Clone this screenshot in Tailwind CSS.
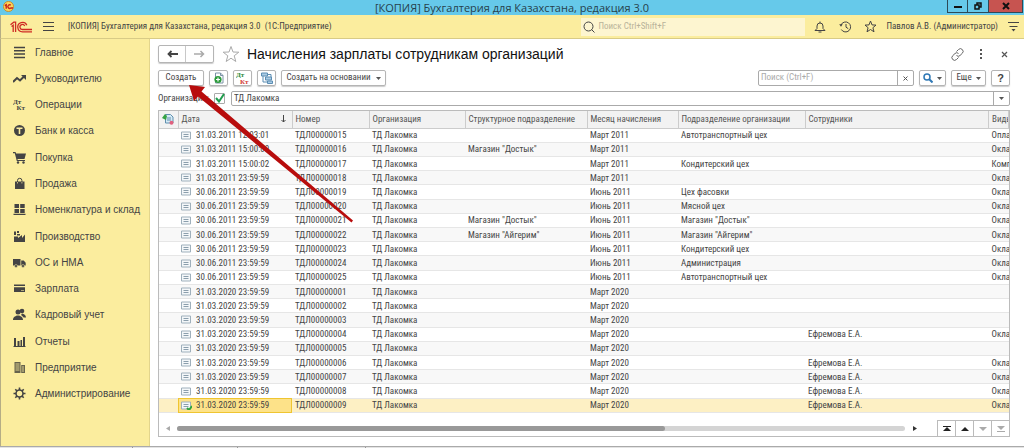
<!DOCTYPE html>
<html lang="ru">
<head>
    <meta charset="UTF-8">
    <meta name="viewport" content="width=device-width, initial-scale=1.0">
    <title>Бухгалтерия для Казахстана - Начисления зарплаты</title>
    <script src="https://cdn.jsdelivr.net/npm/@tailwindcss/browser@4"></script>
</head>
<body class="h-screen flex flex-col overflow-hidden bg-white text-[#444] text-[9px] font-['Roboto_Condensed','Liberation_Sans_Narrow',sans-serif]">

    <!-- Window title -->
    <header class="relative h-[15px] shrink-0 bg-[#66c9ea] flex items-center justify-center">
        <svg class="absolute left-[3px] top-px size-[11px]" viewBox="0 0 12 12">
            <circle cx="6" cy="6" r="5.5" fill="#fbd45a" stroke="#c98a2a"/>
            <path d="M2 5l1.500-1v4.500M8.500 4.500a2 2 0 1 0 0 3.200h2.500" fill="none" stroke="#c8201c" stroke-width="1.500"/>
        </svg>
        <p class="text-[11px] leading-[14px] text-[#26414c] font-['Open_Sans',sans-serif]">[КОПИЯ] Бухгалтерия для Казахстана, редакция 3.0</p>
        <div class="absolute right-[1px] top-0 h-[13px] flex border border-t-0 border-[#2d4a57]">
            <button aria-label="Свернуть" class="w-[20px] flex items-center justify-center border-r border-[#2d4a57]"><svg class="w-2 h-2" viewBox="0 0 8 8"><path d="M0 5h8" stroke="#111" stroke-width="2"/></svg></button>
            <button aria-label="Развернуть" class="w-[20px] flex items-center justify-center"><svg class="w-2 h-2" viewBox="0 0 8 8"><path d="M1 3h4v4H1zM3 3V1h4v4H5" fill="none" stroke="#111" stroke-width="1.500"/></svg></button>
            <button aria-label="Закрыть" class="w-[34px] flex items-center justify-center bg-[#c75450] border-l border-[#2d4a57]"><svg class="w-2 h-2" viewBox="0 0 8 8"><path d="M1 1l6 6M7 1L1 7" stroke="#111" stroke-width="2"/></svg></button>
        </div>
    </header>

    <!-- Application bar -->
    <div class="h-[24px] shrink-0 flex items-center bg-[#fbed9e] border-b border-[#d8cb86] border-l border-l-[#b5ad85] pl-[9px] pr-[5px]">
        <svg class="w-[22px] h-[12px] shrink-0" viewBox="0 0 22 12" fill="none" stroke="#cf2b25" stroke-width="1.300">
            <path d="M.5 3.800L3.800 1.200H5.600V11M1.500 5.500L3.200 4.300V11"/>
            <path d="M16.800 4.200A4.700 4.700 0 1 0 12.500 10.800H22"/>
            <path d="M14.700 5A2.500 2.500 0 1 0 12.500 8.500H22"/>
        </svg>
        <button aria-label="Меню" class="ml-[11px] shrink-0"><svg class="w-[11px] h-[10px]" viewBox="0 0 11 10"><path d="M0 .5h11M0 4.500h11M0 8.500h11" stroke="#444"/></svg></button>
        <p class="ml-[14px] whitespace-pre">[КОПИЯ] Бухгалтерия для Казахстана, редакция 3.0  (1С:Предприятие)</p>
        <label class="ml-auto w-[224px] h-[18px] flex items-center gap-[3px] pl-[2px] bg-[#fdf5d0]">
            <svg class="size-[12px] shrink-0" viewBox="0 0 12 12" fill="none" stroke="#444"><circle cx="5.500" cy="5.500" r="4.500"/><path d="M8.500 8.500l3 3"/></svg>
            <input type="text" placeholder="Поиск Ctrl+Shift+F" class="flex-1 min-w-0 outline-none placeholder:text-[#b9b39a]">
        </label>
        <button aria-label="Оповещения" class="ml-[9px]"><svg class="size-[12px]" viewBox="0 0 12 12" fill="none" stroke="#444"><path d="M1 9.500h10L9 7.500V5a3 3 0 0 0-6 0v2.500zM6 .5v1.500M4.500 11h3"/></svg></button>
        <button aria-label="История" class="ml-[13px]"><svg class="w-[13px] h-[12px]" viewBox="0 0 13 12" fill="none" stroke="#444"><path d="M2 4a5 5 0 1 1 .3 4.500M7 3v3.200l2.300 1.500"/><path d="M.2 3.200h3.500L2 5.800z" fill="#444" stroke="none"/></svg></button>
        <button aria-label="Избранное" class="ml-[12px]"><svg class="size-[13px]" viewBox="0 0 13 13" fill="none" stroke="#444"><path d="M6.500 1l1.500 3.900 4 .2-3.100 2.600 1.100 4.100-3.500-2.300-3.500 2.300 1.100-4.100L1 5.100l4-.2z"/></svg></button>
        <a href="#" class="ml-[9px] whitespace-nowrap">Павлов А.В. (Администратор)</a>
        <button aria-label="Настройки" class="ml-[10px]"><svg class="w-[11px] h-[10px]" viewBox="0 0 11 10"><path d="M0 .5h11M1.500 4.500h8" stroke="#444"/><path d="M3.500 7h4l-2 2.500z" fill="#444"/></svg></button>
    </div>

    <div class="flex-1 min-h-0 flex">
        <!-- Sections -->
        <nav class="w-[150px] shrink-0 bg-[#fbed9e] border-l border-l-[#b5ad85] border-r border-r-[#e3d58c]">
            <ul id="sections" class="h-[368px] flex flex-col text-[10px] font-['Liberation_Sans',sans-serif]"></ul>
        </nav>

        <main class="flex-1 min-w-0 flex flex-col pl-[8px] pr-[14px] pt-[6px] pb-[9px]">
            <div class="h-[18px] flex items-center">
                <div class="h-[18px] flex border border-[#b5b5b5] rounded-[2px] shadow-[0_1px_1px_#ccc]">
                    <button aria-label="Назад" class="w-[27px] flex items-center justify-center border-r border-[#c8c8c8]"><svg class="w-[11px] h-[8px]" viewBox="0 0 11 8"><path d="M1 4h10M4.500 1L1.500 4l3 3" fill="none" stroke="#444" stroke-width="1.800"/></svg></button>
                    <button aria-label="Вперед" class="w-[27px] flex items-center justify-center"><svg class="w-[11px] h-[8px]" viewBox="0 0 11 8"><path d="M0 4h10M6.500 1l3 3-3 3" fill="none" stroke="#aaa" stroke-width="1.500"/></svg></button>
                </div>
                <button aria-label="В избранное" class="ml-[8px]"><svg class="size-[18px]" viewBox="0 0 18 18"><path d="M9 1.500l2 5.500 5.800.2-4.600 3.600 1.600 5.700L9 13.200l-4.800 3.300 1.600-5.700L1.200 7.200 7 7z" fill="none" stroke="#aaa"/></svg></button>
                <h1 class="ml-[7px] text-[14px] leading-[18px] text-[#111] whitespace-nowrap font-['Liberation_Sans',sans-serif]">Начисления зарплаты сотрудникам организаций</h1>
                <button aria-label="Ссылка" class="ml-auto"><svg class="size-[13px]" viewBox="0 0 13 13" fill="none" stroke="#666"><path d="M5.500 3.500L7.500 1.500a2.500 2.500 0 0 1 3.800 3.800L9 7.500a2.500 2.500 0 0 1-3.500 0M7.500 9.500l-2 2a2.500 2.500 0 0 1-3.800-3.800L4 5.500a2.500 2.500 0 0 1 3.500 0"/></svg></button>
                <button aria-label="Действия" class="ml-[15px]"><svg class="w-[4px] h-[10px]" viewBox="0 0 4 10" fill="#555"><path d="M1 0h2v2H1zM1 4h2v2H1zM1 8h2v2H1z"/></svg></button>
                <button aria-label="Закрыть форму" class="ml-[18px] mr-[2px]"><svg class="size-[7px]" viewBox="0 0 7 7"><path d="M1 1l5 5M6 1L1 6" stroke="#555" stroke-width="1.200"/></svg></button>
            </div>

            <!-- Commands -->
            <div class="mt-[7px] h-[16px] flex items-stretch gap-[5px] text-[#444]">
                <button class="w-[46px] border border-[#b5b5b5] rounded-[2px] shadow-[0_1px_1px_#ccc]">Создать</button>
                <button aria-label="Создать копированием" class="w-[19px] flex items-center justify-center border border-[#b5b5b5] rounded-[2px] shadow-[0_1px_1px_#ccc]"><svg class="size-[12px]" viewBox="0 0 12 12"><path d="M2.500 1h5l2.500 2.500V11H2.500z" fill="#fff" stroke="#7b93a6"/><path d="M7.500 1v2.500H10" fill="none" stroke="#7b93a6"/><circle cx="5" cy="7.500" r="3.600" fill="#2d9c3c"/><path d="M5 5.500v4M3 7.500h4" stroke="#fff" stroke-width="1.200"/></svg></button>
                <button aria-label="Проводки" class="w-[19px] flex items-center justify-center border border-[#b5b5b5] rounded-[2px] shadow-[0_1px_1px_#ccc]"><svg class="size-[14px] font-bold font-['Liberation_Serif',serif]" viewBox="0 0 14 14"><text x="0" y="6" font-size="7" fill="#2b8a3a">Дт</text><text x="4" y="13" font-size="7" fill="#d23a34">Кт</text></svg></button>
                <button aria-label="Структура подчиненности" class="w-[19px] flex items-center justify-center border border-[#b5b5b5] rounded-[2px] shadow-[0_1px_1px_#ccc]"><svg class="size-[12px]" viewBox="0 0 12 12" fill="#a9cbe4" stroke="#5b8db3"><path d="M.5 1h6v3h-6zM4.500 5h6v3h-6zM6.500 9h5v2.500h-5z"/><path d="M2 4v6h4.500M6.500 2.500H10V5" fill="none"/></svg></button>
                <button class="w-[105px] flex items-center justify-center gap-[5px] whitespace-nowrap border border-[#b5b5b5] rounded-[2px] shadow-[0_1px_1px_#ccc]">Создать на основании<svg class="w-[5px] h-[3px]" viewBox="0 0 5 3"><path d="M0 0h5L2.500 3z" fill="#555"/></svg></button>
                <div class="ml-auto w-[156px] flex border border-[#aaa] rounded-[2px]">
                    <input type="text" aria-label="Поиск" placeholder="Поиск (Ctrl+F)" class="flex-1 min-w-0 px-[2px] outline-none placeholder:text-[#aaa]">
                    <button aria-label="Очистить" class="w-[16px] flex items-center justify-center border-l border-[#aaa]"><svg class="size-[5px]" viewBox="0 0 5 5"><path d="M.5.5l4 4M4.500.5l-4 4" stroke="#555"/></svg></button>
                </div>
                <button aria-label="Найти" class="w-[27px] flex items-center justify-center gap-[4px] border border-[#b5b5b5] rounded-[2px] shadow-[0_1px_1px_#ccc]"><svg class="size-[10px]" viewBox="0 0 10 10" fill="none" stroke="#2f78b5"><circle cx="4" cy="4" r="3" stroke-width="1.500"/><path d="M6 6l3.500 3.500" stroke-width="2"/></svg><svg class="w-[5px] h-[3px]" viewBox="0 0 5 3"><path d="M0 0h5L2.500 3z" fill="#555"/></svg></button>
                <button class="w-[35px] flex items-center justify-center gap-[4px] border border-[#b5b5b5] rounded-[2px] shadow-[0_1px_1px_#ccc]">Еще<svg class="w-[5px] h-[3px]" viewBox="0 0 5 3"><path d="M0 0h5L2.500 3z" fill="#555"/></svg></button>
                <button class="w-[19px] text-[11px] leading-[14px] font-bold border border-[#b5b5b5] rounded-[2px] shadow-[0_1px_1px_#ccc] font-['Liberation_Sans',sans-serif]">?</button>
            </div>

            <!-- Filter -->
            <div class="mt-[5px] h-[15px] flex items-center">
                <label for="useOrg" class="w-[56px] whitespace-nowrap overflow-hidden">Организация:</label>
                <span class="relative size-[11px] mr-[6px]">
                    <input id="useOrg" type="checkbox" checked class="appearance-none block size-[11px] border border-[#aaa] rounded-[1px] bg-white">
                    <svg class="absolute left-px top-0 size-[10px] pointer-events-none" viewBox="0 0 10 10"><path d="M1 5l3 3.500L9 1" fill="none" stroke="#1f9d4d" stroke-width="2"/></svg>
                </span>
                <div class="flex-1 h-[15px] flex border border-[#aaa] rounded-[2px]">
                    <input type="text" aria-label="Организация" value="ТД Лакомка" class="flex-1 min-w-0 px-[2px] outline-none">
                    <button aria-label="Выбрать" class="w-[16px] flex items-center justify-center border-l border-[#aaa]"><svg class="w-[5px] h-[3px]" viewBox="0 0 5 3"><path d="M0 0h5L2.500 3z" fill="#555"/></svg></button>
                </div>
            </div>

            <!-- List -->
            <div class="mt-[4px] flex-1 min-h-0 flex flex-col border border-[#bbb] overflow-hidden">
                <table class="w-full h-[302px] table-fixed border-collapse leading-[12px]">
                    <colgroup>
                        <col class="w-[19px]"><col class="w-[114px]"><col class="w-[77px]"><col class="w-[96px]"><col class="w-[122px]"><col class="w-[91px]"><col class="w-[127px]"><col><col class="w-[20px]">
                    </colgroup>
                    <thead>
                        <tr class="h-[17px] bg-[#f2f2f2] text-left text-[#555] whitespace-nowrap *:font-normal *:p-0 *:pl-[3px] *:overflow-hidden *:border-r *:border-b *:border-[#ccc]">
                            <th aria-label="Состояние"><svg class="size-[12px]" viewBox="0 0 12 12"><path d="M3.500 1.500h5L11 4v6H3.500z" fill="#d5eaf5" stroke="#5e8fae"/><path d="M5 5h4M5 7h4" stroke="#5e8fae"/><path d="M0 5l3-4 2 2-1 4z" fill="#35a344"/><circle cx="9.500" cy="9.800" r="2" fill="#e0607e"/></svg></th>
                            <th><div class="flex items-center justify-between pr-[6px]">Дата<svg class="w-[5px] h-[8px]" viewBox="0 0 5 8"><path d="M2.500 0v7M.5 5l2 2 2-2" fill="none" stroke="#444"/></svg></div></th>
                            <th>Номер</th>
                            <th>Организация</th>
                            <th>Структурное подразделение</th>
                            <th>Месяц начисления</th>
                            <th>Подразделение организации</th>
                            <th>Сотрудники</th>
                            <th>Виды</th>
                        </tr>
                    </thead>
                    <tbody id="rows"></tbody>
                </table>
                <div class="mt-auto h-[16px] flex items-center">
                    <svg class="ml-[7px] w-[4px] h-[5px]" viewBox="0 0 4 5"><path d="M4 0v5L0 2.500z" fill="#aaa"/></svg>
                    <div class="ml-[7px] flex-1 h-[5px] rounded-full bg-[#d4d4d4]"><div class="w-[67%] h-full rounded-full bg-[#999]"></div></div>
                    <svg class="ml-[8px] mr-[20px] w-[4px] h-[5px]" viewBox="0 0 4 5"><path d="M0 0v5l4-2.500z" fill="#333"/></svg>
                    <div class="h-full flex border-t border-[#bbb] *:w-[18px] *:flex *:items-center *:justify-center *:border-l *:border-[#bbb]">
                        <button aria-label="В начало"><svg class="w-[8px] h-[6px]" viewBox="0 0 8 6"><path d="M0 0h8v1H0zM4 1l4 4H0z" fill="#222"/></svg></button>
                        <button aria-label="Выше"><svg class="w-[8px] h-[6px]" viewBox="0 0 8 6"><path d="M4 1l4 4H0z" fill="#222"/></svg></button>
                        <button aria-label="Ниже"><svg class="w-[8px] h-[6px]" viewBox="0 0 8 6"><path d="M0 1h8L4 5z" fill="#aaa"/></svg></button>
                        <button aria-label="В конец"><svg class="w-[8px] h-[6px]" viewBox="0 0 8 6"><path d="M0 0h8L4 4zM0 5h8v1H0z" fill="#aaa"/></svg></button>
                    </div>
                </div>
            </div>
        </main>
    </div>

    <!-- Open windows strip -->
    <footer class="h-[2px] shrink-0 flex bg-[#e4e4e4] border-t border-[#aaa] *:border-r *:border-[#999]">
        <span class="w-[133px]"></span>
        <span class="w-[105px]"></span>
        <span class="w-[128px]"></span>
    </footer>

    <!-- Pointer to the create button -->
    <svg class="absolute left-[188px] top-[84px] w-[166px] h-[140px] pointer-events-none" viewBox="0 0 166 140">
        <path d="M1 1L17 3L13.500 7.500L165 136.500L163.500 138.500L10 12.500L6 17z" fill="#b80d0d"/>
    </svg>

    <script>
        const sections = [
            ["Главное", '<path d="M1 1.500h11M1 4.800h11M1 8.100h11M1 11.500h11" stroke="#444" stroke-width="1.500"/>'],
            ["Руководителю", '<path d="M0 10l4-4 3 2.500 4-4" fill="none" stroke="#444" stroke-width="2"/><path d="M8 3h5v5z"/>'],
            ["Операции", '<text x="0" y="6" font-size="7" font-weight="bold" font-family="Liberation Serif">Дт</text><text x="3.500" y="12" font-size="7" font-weight="bold" font-family="Liberation Serif">Кт</text>'],
            ["Банк и касса", '<circle cx="6.500" cy="6.500" r="5.500"/><path d="M3.500 4.300h6M6.500 4.300V10" stroke="#fbed9e" stroke-width="1.600"/>'],
            ["Покупка", '<path d="M0 1h2.500l.6 1.500H13L11.500 8H4.500l.2 1H12v1H3.800L1.800 2.200H0z"/><circle cx="5" cy="11.500" r="1.200"/><circle cx="10.500" cy="11.500" r="1.200"/>'],
            ["Продажа", '<path d="M2 4.500h9.500V12H2z"/><path d="M4.500 6V3.500a2.200 2.200 0 0 1 4.400 0V6" fill="none" stroke="#444"/><path d="M4.500 5v1.500M8.900 5v1.500" stroke="#fbed9e" stroke-width=".7"/>'],
            ["Номенклатура и склад", '<path d="M1.500 1h4.500v4H1.500zM7.200 1h4.500v4H7.200zM1.500 6h4.500v4H1.500zM7.200 6h4.500v4H7.200zM.5 10.700h12V12H.5z"/>'],
            ["Производство", '<path d="M1 12V6.500h4V8l4-3v3l3-3.500V12z"/><path d="M1 1.500h2V5H1zM4 1h2v2H4zM4 4h3v1.500H4z"/>'],
            ["ОС и НМА", '<path d="M0 3h7.500v6.500H0zM8.200 4.500h2.500l2 2.300v2.700H8.200z"/><circle cx="3" cy="10" r="1.500" stroke="#fbed9e" stroke-width=".5"/><circle cx="10" cy="10" r="1.500" stroke="#fbed9e" stroke-width=".5"/>'],
            ["Зарплата", '<path d="M1 2.500h11V4H1zM1 5.200h11V10H1z"/><path d="M8 8.500h3" stroke="#fbed9e" stroke-width=".6"/>'],
            ["Кадровый учет", '<circle cx="5" cy="4" r="2.500"/><circle cx="9" cy="3" r="2.300"/><path d="M0 12c0-3 2-3.500 4-4.500h2c2 1 4 1.500 4 4.500zM8 7l1-1.500c2 .5 4 1.500 4 4h-2.500C10 8.500 9 7.800 8 7z"/>'],
            ["Отчеты", '<path d="M1 3h2v8H1zM4.500 6h2v5h-2zM7.500 5h1.500v6H7.500zM10 2h2v9h-2zM.5 11h12v1H.5z"/>'],
            ["Предприятие", '<path d="M1.500 1h6v11h-6zM8.200 4H12v8H8.200z" fill="#66634c"/><path d="M2.500 3h4M2.500 5h4M2.500 7h4M2.500 9h4M9 6h2M9 8h2M9 10h2" stroke="#fbed9e" stroke-width=".8"/>'],
            ["Администрирование", '<circle cx="6.500" cy="6.500" r="3.500" fill="none" stroke="#444" stroke-width="1.600"/><path d="M6.500 .5v2.500M6.500 10v2.500M.5 6.500h2.500M10 6.500h2.500M2.300 2.300L4 4M9 9l1.700 1.700M2.300 10.700L4 9M9 4l1.700-1.700" stroke="#444" stroke-width="1.600"/>']
        ];

        document.getElementById("sections").innerHTML = sections.map(([name, icon]) =>
            `<li class="flex-1 flex"><a href="#" class="flex-1 flex items-center gap-[9px] pl-[12px] text-[#444]">
                <svg class="size-[13px] shrink-0" viewBox="0 0 13 13" fill="#444">${icon}</svg>${name}</a></li>`
        ).join('');

        // дата, номер, структурное подразделение, месяц, подразделение, сотрудник, вид
        const docs = [
            ["31.03.2011 12:03:01", "15", "", "Март 2011", "Автотранспортный цех", "", "Оплата"],
            ["31.03.2011 15:00:00", "16", 'Магазин "Достык"', "Март 2011", "", "", "Оклад"],
            ["31.03.2011 15:00:02", "17", "", "Март 2011", "Кондитерский цех", "", "Компенсация"],
            ["31.03.2011 23:59:59", "18", "", "Март 2011", "", "", "Оклад"],
            ["30.06.2011 23:59:59", "19", "", "Июнь 2011", "Цех фасовки", "", "Оклад"],
            ["30.06.2011 23:59:59", "20", "", "Июнь 2011", "Мясной цех", "", "Оклад"],
            ["30.06.2011 23:59:59", "21", 'Магазин "Достык"', "Июнь 2011", 'Магазин "Достык"', "", "Оклад"],
            ["30.06.2011 23:59:59", "22", 'Магазин "Айгерим"', "Июнь 2011", 'Магазин "Айгерим"', "", "Оклад"],
            ["30.06.2011 23:59:59", "23", "", "Июнь 2011", "Кондитерский цех", "", "Оклад"],
            ["30.06.2011 23:59:59", "24", "", "Июнь 2011", "Администрация", "", "Оклад"],
            ["30.06.2011 23:59:59", "25", "", "Июнь 2011", "Автотранспортный цех", "", "Оклад"],
            ["31.03.2020 23:59:59", "01", "", "Март 2020", "", "", ""],
            ["31.03.2020 23:59:59", "02", "", "Март 2020", "", "", ""],
            ["31.03.2020 23:59:59", "03", "", "Март 2020", "", "", ""],
            ["31.03.2020 23:59:59", "04", "", "Март 2020", "", "Ефремова Е.А.", "Оклад"],
            ["31.03.2020 23:59:59", "05", "", "Март 2020", "", "", ""],
            ["31.03.2020 23:59:59", "06", "", "Март 2020", "", "Ефремова Е.А.", "Оклад"],
            ["31.03.2020 23:59:59", "07", "", "Март 2020", "", "Ефремова Е.А.", "Оклад"],
            ["31.03.2020 23:59:59", "08", "", "Март 2020", "", "Ефремова Е.А.", "Оклад"],
            ["31.03.2020 23:59:59", "09", "", "Март 2020", "", "Ефремова Е.А.", "Оклад"]
        ];

        document.getElementById("rows").innerHTML = docs.map(([date, num, unit, month, dept, person, kind], i) => {
            const last = i === docs.length - 1;
            const check = last ? '<path d="M6 7l2 2 3-4" fill="none" stroke="#2fa33c" stroke-width="2"/>' : '';
            return `<tr class="${last ? 'bg-[#fdf0c4]' : 'even:bg-[#f8f8f8]'} border-b border-[#e6e6e6] whitespace-nowrap *:p-0 *:pl-[3px] *:overflow-hidden">
                <td></td>
                <td class="${last ? 'bg-[#fde289] outline outline-[#efc530] -outline-offset-1' : ''}"><div class="flex items-center gap-[4px]"><svg class="w-[11px] h-[9px]" viewBox="0 0 11 9"><path d="M.5 1h9v7h-9z" fill="#f4f7f9" stroke="#9fb0bc"/><path d="M2.500 3.500h5M2.500 5.500h5" stroke="#8b9eac"/>${check}</svg>${date}</div></td>
                <td>ТДЛ000000${num}</td>
                <td>ТД Лакомка</td>
                <td>${unit}</td>
                <td>${month}</td>
                <td>${dept}</td>
                <td>${person}</td>
                <td>${kind}</td>
            </tr>`;
        }).join('');
    </script>
</body>
</html>
